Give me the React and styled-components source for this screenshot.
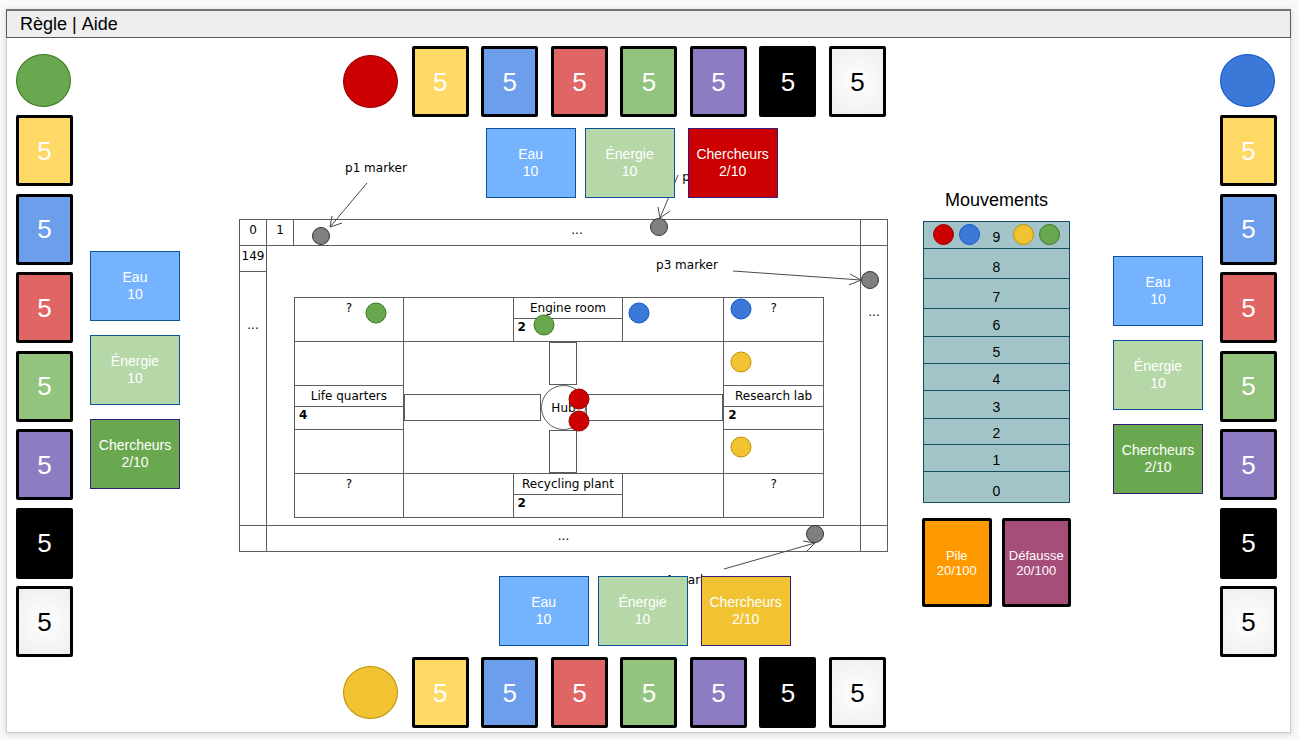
import React from "react";
import styled, { createGlobalStyle } from "styled-components";

const GlobalStyle = createGlobalStyle`
  * { box-sizing: border-box; }
  body {
    margin: 0;
    background: #f8f9fb;
    color: #000;
    font-family: "Liberation Sans", Arial, sans-serif;
  }
  ul, ol { list-style: none; margin: 0; padding: 0; }
`;

const palette = {
  green: { fill: "#6aa84f", line: "#38761d" },
  red: { fill: "#cc0000", line: "#990000" },
  blue: { fill: "#3c78d8", line: "#1155cc" },
  yellow: { fill: "#f1c232", line: "#bf9000" },
};

const LINE = "#5c5c5c";

/* ---------- page ---------- */

const Frame = styled.div`
  padding: 9px 8px 7px 6px;
`;

const Page = styled.div`
  background: #fff;
  box-shadow: 0 1px 5px 1px rgba(60, 64, 67, 0.15);
`;

const MenuBar = styled.nav`
  display: flex;
  gap: 5px;
  padding: 0 13px;
  border: 1px solid #595959;
  border-top: 2px solid #757575;
  background: #eee;
  font-size: 18px;
  line-height: 26px;
`;

const MenuLink = styled.a`
  color: #000;
  text-decoration: none;
`;

const Table = styled.main`
  display: flex;
  border: 1px solid #ccc;
  border-top: 0;
  padding: 0 13px 0 9px;
`;

/* ---------- players ---------- */

const SidePlayer = styled.section`
  display: flex;
  flex: none;
  flex-direction: ${(p) => (p.$mirrored ? "row-reverse" : "row")};
  gap: 17px;
`;

const SideHand = styled.div`
  display: flex;
  flex-direction: column;
  gap: 8px;
  padding: 16px 0 75px;
`;

const Avatar = styled.div`
  flex: none;
  width: 55px;
  height: 53px;
  border: 1px solid ${(p) => palette[p.$color].line};
  border-radius: 50%;
  background: ${(p) => palette[p.$color].fill};
`;

const CardList = styled.ul`
  display: flex;
  flex: 1;
  flex-direction: ${(p) => (p.$vertical ? "column" : "row")};
  justify-content: space-between;
`;

const Card = styled.li`
  display: flex;
  align-items: center;
  justify-content: center;
  width: 57px;
  height: 71px;
  border: 3px solid #000;
  border-radius: 2px;
  background: ${(p) => p.$fill};
  color: ${(p) => p.$ink};
  font-size: 26px;
  line-height: 30px;
`;

const HandRow = styled.div`
  display: flex;
  align-items: center;
  gap: 14px;
  padding: 0 2px 0 16%;
`;

const SideResources = styled.div`
  display: flex;
  flex-direction: column;
  gap: 14px;
  padding-top: ${(p) => p.$top}px;
`;

const ResourceRow = styled.div`
  position: relative;
  z-index: 1;
  display: flex;
  gap: 13px;
  padding-left: ${(p) => p.$indent};
`;

const Supplies = styled.div`
  display: flex;
  gap: 9px;
`;

const Resource = styled.div`
  display: flex;
  flex-direction: column;
  align-items: center;
  justify-content: center;
  width: 90px;
  height: 70px;
  border: 1px solid ${(p) => p.$line};
  background: ${(p) => p.$fill};
  color: #fff;
  font-size: 14px;
  line-height: 17px;
`;

/* ---------- board ---------- */

const Center = styled.div`
  display: flex;
  flex: 1;
  flex-direction: column;
  gap: 11px;
  min-width: 0;
  margin: 0 34px 0 59px;
  padding: 8px 0 4px;
`;

const BoardArea = styled.section`
  position: relative;
  margin: 10px 0 13px;
  font-family: "DejaVu Sans", Verdana, sans-serif;
  font-size: 12px;
  line-height: 16px;
`;

const Board = styled.div`
  display: grid;
  grid-template-columns: 26px 1fr 26px;
  grid-template-rows: 25px auto 25px;
  gap: 1px;
  padding: 1px;
`;

const Space = styled.div`
  outline: 1px solid ${LINE};
  padding-top: ${(p) => p.$top ?? 2}px;
  text-align: center;
`;

const TopSpaces = styled.div`
  display: grid;
  grid-template-columns: 26px 1fr;
  gap: 1px;
`;

const LeftSpaces = styled.div`
  display: grid;
  grid-template-rows: 25px 1fr;
  gap: 1px;
`;

const Station = styled.div`
  padding: 52px 37px 8px 28px;
`;

const Rooms = styled.div`
  display: grid;
  grid-template-columns: 108fr 109fr 109fr 100fr 99fr;
  grid-template-rows: repeat(5, 43px);
  gap: 1px;
`;

const Room = styled.div`
  grid-column: ${(p) => p.$col};
  grid-row: ${(p) => p.$row};
  outline: 1px solid ${LINE};
  text-align: center;
`;

const RoomName = styled.div`
  height: 21px;
  padding-top: 2px;
  border-bottom: 1px solid ${(p) => (p.$ruled ? LINE : "transparent")};
  white-space: nowrap;
`;

const RoomCount = styled.div`
  padding-left: 4px;
  font-weight: bold;
  text-align: left;
`;

const Core = styled.div`
  display: grid;
  grid-column: 2 / 5;
  grid-row: 2 / 5;
  grid-template-columns: 1fr 45px 1fr;
  grid-template-rows: 43px 45px 43px;
  place-items: center;
`;

const Corridor = styled.div`
  grid-column: ${(p) => p.$col};
  grid-row: ${(p) => p.$row};
  width: ${(p) => (p.$vertical ? "28px" : "100%")};
  height: ${(p) => (p.$vertical ? "100%" : "27px")};
  border: 1px solid ${LINE};
`;

const Hub = styled.div`
  display: flex;
  grid-column: 2;
  grid-row: 2;
  align-items: center;
  justify-content: center;
  width: 45px;
  height: 45px;
  border: 1px solid ${LINE};
  border-radius: 50%;
`;

const Arrows = styled.svg`
  position: absolute;
  inset: 0;
  width: 100%;
  height: 100%;
  overflow: visible;
  fill: none;
  stroke: #4a4a4a;
  stroke-width: 1;
`;

const Placed = styled.span`
  position: absolute;
  left: ${(p) => p.$x}%;
  top: ${(p) => p.$y}%;
  transform: translate(-50%, -50%);
  white-space: nowrap;
`;

const Marker = styled(Placed)`
  width: 18px;
  height: 18px;
  border: 1px solid #333;
  border-radius: 50%;
  background: #808080;
`;

const Pawn = styled.span`
  display: block;
  width: 21px;
  height: 21px;
  border: 1px solid ${(p) => palette[p.$color].line};
  border-radius: 50%;
  background: ${(p) => palette[p.$color].fill};
`;

/* ---------- movements ---------- */

const Movements = styled.section`
  flex: none;
  width: 149px;
  margin-right: 42px;
  padding-top: 151px;
`;

const Title = styled.h2`
  margin: 0 0 10px;
  font-size: 18px;
  font-weight: normal;
  line-height: 22px;
  text-align: center;
`;

const Steps = styled.ol`
  margin: 0 1px 15px;
  border: 1px solid #134f5c;
  background: #a2c4c9;
`;

const Step = styled.li`
  display: flex;
  align-items: flex-end;
  justify-content: ${(p) => (p.$spread ? "space-between" : "center")};
  height: ${(p) => p.$height}px;
  padding: 0 9px 3px;
  border-bottom: 1px solid #134f5c;
  font-size: 14px;
  line-height: 16px;

  &:last-child { border-bottom: 0; }
`;

const PawnPair = styled.div`
  display: flex;
  gap: 5px;
`;

const Decks = styled.div`
  display: flex;
  gap: 10px;
`;

const Deck = styled.button`
  flex: 1;
  height: 89px;
  padding: 0;
  border: 3px solid #000;
  border-radius: 2px;
  background: ${(p) => p.$fill};
  color: #fff;
  font-family: inherit;
  font-size: 13px;
  line-height: 15px;
`;

/* ---------- data ---------- */

const cards = [
  ["#ffd966", "#fff"],
  ["#6d9eeb", "#fff"],
  ["#e06666", "#fff"],
  ["#93c47d", "#fff"],
  ["#8e7cc3", "#fff"],
  ["#000", "#fff"],
  ["radial-gradient(circle, #fff 0%, #eee 100%)", "#000"],
];

const steps = [
  [9, 27], [8, 30], [7, 30], [6, 28], [5, 27],
  [4, 27], [3, 28], [2, 26], [1, 27], [0, 30],
];

const BOARD_W = 649;
const BOARD_H = 333;
const at = (x, y) => ({ $x: (x / BOARD_W) * 100, $y: (y / BOARD_H) * 100 });

const markers = [[82, 17], [420, 8], [631, 61], [576, 315]];

const labels = [
  ["p1 marker", 137, -51],
  ["p2", 451, -42],
  ["p3 marker", 448, 46],
  ["p4 marker", 449, 361],
];

const pawns = [
  ["green", 137, 94],
  ["green", 305, 106],
  ["blue", 400, 94],
  ["blue", 502, 90],
  ["yellow", 502, 143],
  ["yellow", 502, 228],
  ["red", 340, 180],
  ["red", 340, 202],
];

const arrows = [
  "M128 -36 L91 8 M93 -3 L91 8 L103 4",
  "M439 -44 L421 -1 M419 -12 L421 -1 L431 -8",
  "M494 52 L622 61 M611 55 L622 61 L610 66",
  "M485 350 L576 324 M564 322 L576 324 L568 332",
];

/* ---------- parts ---------- */

const Cards = ({ vertical }) => (
  <CardList $vertical={vertical}>
    {cards.map(([fill, ink]) => (
      <Card key={fill} $fill={fill} $ink={ink}>5</Card>
    ))}
  </CardList>
);

const Water = () => (
  <Resource $fill="#76b3ff" $line="#0b5394"><span>Eau</span><span>10</span></Resource>
);

const Energy = () => (
  <Resource $fill="#b6d7a8" $line="#0b5394"><span>Énergie</span><span>10</span></Resource>
);

const Researchers = ({ color }) => (
  <Resource $fill={palette[color].fill} $line="#351c75">
    <span>Chercheurs</span><span>2/10</span>
  </Resource>
);

const Side = ({ color, mirrored, top }) => (
  <SidePlayer $mirrored={mirrored}>
    <SideHand>
      <Avatar $color={color} />
      <Cards vertical />
    </SideHand>
    <SideResources $top={top}>
      <Water />
      <Energy />
      <Researchers color="green" />
    </SideResources>
  </SidePlayer>
);

const Hand = ({ color }) => (
  <HandRow>
    <Avatar $color={color} />
    <Cards />
  </HandRow>
);

const Resources = ({ color, indent }) => (
  <ResourceRow $indent={indent}>
    <Supplies>
      <Water />
      <Energy />
    </Supplies>
    <Researchers color={color} />
  </ResourceRow>
);

const NamedRoom = ({ col, row, name, count }) => (
  <Room $col={col} $row={row}>
    <RoomName $ruled={count !== undefined}>{name}</RoomName>
    {count !== undefined && <RoomCount>{count}</RoomCount>}
  </Room>
);

const GameBoard = () => (
  <BoardArea>
    <Board>
      <Space>0</Space>
      <TopSpaces>
        <Space>1</Space>
        <Space>...</Space>
      </TopSpaces>
      <Space />
      <LeftSpaces>
        <Space>149</Space>
        <Space $top={45}>...</Space>
      </LeftSpaces>
      <Station>
        <Rooms>
          <NamedRoom col={1} row={1} name="?" />
          <Room $col={2} $row={1} />
          <NamedRoom col={3} row={1} name="Engine room" count={2} />
          <Room $col={4} $row={1} />
          <NamedRoom col={5} row={1} name="?" />
          <Room $col={1} $row={2} />
          <Room $col={5} $row={2} />
          <NamedRoom col={1} row={3} name="Life quarters" count={4} />
          <NamedRoom col={5} row={3} name="Research lab" count={2} />
          <Room $col={1} $row={4} />
          <Room $col={5} $row={4} />
          <NamedRoom col={1} row={5} name="?" />
          <Room $col={2} $row={5} />
          <NamedRoom col={3} row={5} name="Recycling plant" count={2} />
          <Room $col={4} $row={5} />
          <NamedRoom col={5} row={5} name="?" />
          <Core>
            <Corridor $col={2} $row={1} $vertical />
            <Corridor $col={1} $row={2} />
            <Hub>Hub</Hub>
            <Corridor $col={3} $row={2} />
            <Corridor $col={2} $row={3} $vertical />
          </Core>
        </Rooms>
      </Station>
      <Space $top={58}>...</Space>
      <Space />
      <Space>...</Space>
      <Space />
    </Board>
    {labels.map(([text, x, y]) => (
      <Placed key={text} {...at(x, y)}>{text}</Placed>
    ))}
    <Arrows viewBox={`0 0 ${BOARD_W} ${BOARD_H}`} preserveAspectRatio="none" aria-hidden="true">
      {arrows.map((d) => (
        <path key={d} d={d} vectorEffect="non-scaling-stroke" />
      ))}
    </Arrows>
    {markers.map(([x, y]) => (
      <Marker key={x} {...at(x, y)} />
    ))}
    {pawns.map(([color, x, y]) => (
      <Placed key={`${x}-${y}`} {...at(x, y)}><Pawn $color={color} /></Placed>
    ))}
  </BoardArea>
);

export default function App() {
  return (
    <Frame>
      <GlobalStyle />
      <Page>
        <MenuBar>
          <MenuLink href="#regle">Règle</MenuLink>
          <span>|</span>
          <MenuLink href="#aide">Aide</MenuLink>
        </MenuBar>
        <Table>
          <Side color="green" top={213} />
          <Center>
            <Hand color="red" />
            <Resources color="red" indent="38%" />
            <GameBoard />
            <Resources color="yellow" indent="40%" />
            <Hand color="yellow" />
          </Center>
          <Movements>
            <Title>Mouvements</Title>
            <Steps>
              {steps.map(([n, height]) => (
                <Step key={n} $height={height} $spread={n === 9}>
                  {n === 9 && (
                    <PawnPair><Pawn $color="red" /><Pawn $color="blue" /></PawnPair>
                  )}
                  {n}
                  {n === 9 && (
                    <PawnPair><Pawn $color="yellow" /><Pawn $color="green" /></PawnPair>
                  )}
                </Step>
              ))}
            </Steps>
            <Decks>
              <Deck type="button" $fill="#ff9900">Pile<br />20/100</Deck>
              <Deck type="button" $fill="#a64d79">Défausse<br />20/100</Deck>
            </Decks>
          </Movements>
          <Side color="blue" top={218} mirrored />
        </Table>
      </Page>
    </Frame>
  );
}
